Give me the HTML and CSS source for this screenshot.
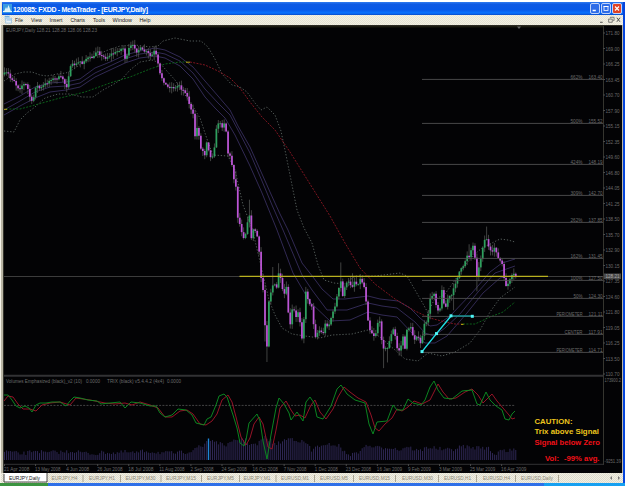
FILE: index.html
```
<!DOCTYPE html>
<html lang="en">
<head>
<meta charset="utf-8">
<title>120085: FXDD - MetaTrader - [EURJPY,Daily]</title>
<link rel="stylesheet" href="styles.css">
</head>
<body>
<div class="window">
  <header class="titlebar">
    <svg class="logo" viewBox="0 0 9 9"><rect width="9" height="9" fill="#3a9be0"/><path d="M1 7.5 L3 3 L4 5 L5.5 1 L8 7.5Z" fill="#d8f2fa"/><path d="M0 7.5H9" stroke="#e8f4fa"/></svg>
    <svg class="title" viewBox="0 0 140 12"><text x="0" y="8.8" textLength="135">120085: FXDD - MetaTrader - [EURJPY,Daily]</text></svg>
    <div class="buttons">
      <svg class="btn" viewBox="0 0 10 10"><path d="M2 7.5H6" stroke="#fff" stroke-width="1.6"/></svg>
      <svg class="btn" viewBox="0 0 10 10"><rect x="2.5" y="2.5" width="5" height="5" fill="none" stroke="#fff"/><path d="M2 2.5H8" stroke="#fff" stroke-width="1.5"/></svg>
      <svg class="btn close" viewBox="0 0 10 10"><path d="M2.5 2.5L7.5 7.5M7.5 2.5L2.5 7.5" stroke="#fff" stroke-width="1.4"/></svg>
    </div>
  </header>
  <nav class="menu">
    <svg class="menuicon" viewBox="0 0 9 9"><rect x=".5" y="0" width="6" height="5" fill="#b9dcf2"/><rect x="2" y="3" width="6.5" height="5.5" fill="#e8f3fa" stroke="#80b4dc" stroke-width=".7"/><path d="M1 1.2H6M3 5H8" stroke="#5c9cd0" stroke-width=".8"/></svg>
    <svg class="menutext" id="menu" viewBox="0 0 170 11"></svg>
    <svg class="mdi" viewBox="0 0 26 11"><path d="M2 8H5" stroke="#444"/><path d="M13.5 3.5V2.5H17.5V6H16.5M11.5 4.5H15.5V8H11.5Z" fill="none" stroke="#555" stroke-width=".8"/><path d="M20.5 3L24 7.5M24 3L20.5 7.5" stroke="#444"/></svg>
  </nav>
  <main class="chartframe"><svg id="chart" class="chart" viewBox="3 25 619 448"></svg></main>
  <footer class="tabs"><svg id="tabs" class="tabsvg" viewBox="0 473 622 10"></svg></footer>
</div>
<div class="taskbar"><span class="start"></span><span class="tray"></span></div>
<script src="chart.js"></script>
</body>
</html>
```
FILE: styles.css
```
* { box-sizing: border-box; }
body {
  margin: 0;
  width: 625px;
  height: 486px;
  overflow: hidden;
  background: #fff;
  padding-top: 2px;
  font-family: "Liberation Sans", Arial, sans-serif;
}
svg { display: block; flex: none; }
.window {
  height: 481px;
  display: flex;
  flex-direction: column;
  background: #ebe8d8;
  border-right: 2px solid #0645dc;
  border-left: 1px solid #f5f3e8;
}
.titlebar {
  height: 13px;
  display: flex;
  align-items: center;
  margin-left: 1px;
  padding-right: 1px;
  background: linear-gradient(#2f7bf0, #0d59e4 18%, #0658e8 60%, #0872ff 85%, #0648c8);
}
.logo { width: 9px; height: 9px; margin: 0 1px 0 1px; }
.title { width: 140px; height: 12px; font: bold 7px "Liberation Sans", sans-serif; fill: #fff; }
.buttons { display: flex; gap: 1px; margin-left: auto; }
.btn { width: 10px; height: 11px; border: 1px solid #bfd3fa; border-radius: 2px; background: #2d6ce8; }
.close { background: #df4326; }
.menu {
  height: 10px;
  display: flex;
  padding-left: 3px;
  background: repeating-conic-gradient(#f2f0e5 0 25%, #e7e4d3 0 50%) 0 0 / 2px 2px;
}
.menuicon { width: 8px; height: 9px; }
.menutext { width: 170px; height: 11px; font: 6.2px "Liberation Sans", sans-serif; fill: #222; }
.mdi { width: 26px; height: 10px; margin-left: auto; }
.chartframe { height: 448px; padding-left: 2px; background: #b9b5a4; display: flex; }
.chart { width: 619px; height: 448px; background: #030305; }
.chart text { font: 5.1px "Liberation Sans", sans-serif; fill: #6a6a6a; }
.chart .small { font-size: 4.6px; }
.chart .alert { font: bold 8px "Liberation Sans", sans-serif; }
.chart .gold { fill: #edc51d; }
.chart .red { fill: #f01018; }
.chart .tag { fill: #aaa; }
.tabs { height: 10px; background: repeating-conic-gradient(#f1efe5 0 25%, #dfdccb 0 50%) 0 0 / 2px 2px; }
.tabsvg { width: 622px; height: 10px; }
.tabsvg text { font: 5.3px "Liberation Sans", sans-serif; fill: #8d8878; }
.tabsvg .active { fill: #111; }
.taskbar { height: 3px; display: flex; background: #2f70e8; }
.start { width: 48px; background: #3b9440; }
.tray { width: 81px; margin-left: auto; background: #16a0f0; }
```
FILE: chart.js
```
const NS = 'http://www.w3.org/2000/svg';
const chart = document.getElementById('chart');

function add(parent, tag, attrs, text) {
  const el = document.createElementNS(NS, tag);
  for (const k in attrs) el.setAttribute(k, attrs[k]);
  if (text !== undefined) el.textContent = text;
  parent.appendChild(el);
  return el;
}
const parse = s => s.trim().split(/\s+/).map(p => p.split(',').map(Number));
const curve = (s, color, dash, w) => add(chart, 'polyline', {
  points: s, fill: 'none', stroke: color, 'stroke-width': w || 0.8,
  'stroke-dasharray': dash || 'none', 'stroke-linejoin': 'round'
});
const line = (x1, y1, x2, y2, color, w, dash) => add(chart, 'line', {
  x1, y1, x2, y2, stroke: color, 'stroke-width': w || 1, 'stroke-dasharray': dash || 'none'
});
const label = (x, y, w, text, cls, anchor) => add(chart, 'text', {
  x, y, textLength: w, lengthAdjust: 'spacingAndGlyphs', class: cls || '', 'text-anchor': anchor || 'start'
}, text);
function at(points, x) {
  for (let i = 1; i < points.length; i++) {
    if (x <= points[i][0]) {
      const [a, b] = [points[i - 1], points[i]];
      return a[1] + (b[1] - a[1]) * (x - a[0]) / (b[0] - a[0]);
    }
  }
  return points[points.length - 1][1];
}
let seed = 7;
const rnd = () => (seed = (seed * 16807) % 2147483647) / 2147483647;

// menu
const menu = document.getElementById('menu');
[['File', 3, 8], ['View', 19, 11], ['Insert', 37.5, 13], ['Charts', 58.5, 14.5], ['Tools', 81, 12], ['Window', 100.5, 19.5], ['Help', 127.5, 11]]
  .forEach(([t, x, w]) => add(menu, 'text', { x, y: 6.7, textLength: w, lengthAdjust: 'spacingAndGlyphs' }, t));

// frame and axes
line(3, 25.5, 622, 25.5, '#2c2b24');
line(4, 26.8, 603.5, 26.8, '#30301c', 0.8);
line(3.5, 25, 3.5, 473, '#34342c');
line(603.5, 26, 603.5, 465, '#35352f');
line(4, 375.8, 603, 375.8, '#323234', 2);
line(4, 464.3, 604, 464.3, '#323234');
line(4, 276.5, 604, 276.5, '#3c3c3c');
add(chart, 'path', { d: 'M517 26.5H521L519 29Z', fill: '#666' });

// price scale
['171.80', '169.00', '166.25', '163.45', '160.70', '157.90', '155.15', '152.35', '149.60', '146.80', '144.05', '141.25', '138.50', '135.70', '132.90', '130.15', '127.35', '124.60', '121.80', '119.05', '116.25', '113.50', '110.70']
  .forEach((t, i) => {
    const y = 33 + i * 15.5;
    line(603, y, 605, y, '#4a4a4a');
    label(605.5, y + 2, 14, t);
  });
label(604.5, 382.3, 16.5, '173900.2', 'small');
label(604.5, 463, 16.5, '-9251.39', 'small');

// bands and averages
const band = '#66706c';
curve('4,81 10,77 15,74 24,72 32,72 40,75 47,76 57,74 66,73 74,69 82,63 95,56 108,50 120,46 135,45 150,47 158,46 163,41 175,38 190,41 201,41 208,47 215,59 222,74 232,85 240,87 247,92 255,103 261,110 267,107 275,115 281,131 286,155 292,185 297,210 304,228 312,243 318,265 324,280 334,283 345,284 355,276 375,276 400,273 407,276 415,290 422,302 428,313 434,300 445,294 455,280 465,265 475,254 482,248 490,244 500,239 508,240 515,242', band, '1.3 1.8');
curve('4,131 14,132 20,120 27,113 35,107 45,98 58,94 70,94 82,97 93,97 103,90 114,84 122,79 130,70 140,62 152,60 160,63 166,70 175,80 183,92 190,102 200,118 208,142 213,155 228,156 235,170 243,205 252,228 262,270 269,300 275,315 282,328 292,334 305,336 320,338 332,335 352,334 368,330 380,337 395,350 405,359 418,361 428,353 442,356 455,352 470,343 480,330 490,312 500,298 515,287', band, '1.3 1.8');
const ma = '#372e5c';
curve('4,104 20,96 35,87 50,83 66,82 80,79 95,68 110,62 125,55 140,51 155,48 165,50 180,57 193,67 205,81 218,96 230,110 238,126 250,147 262,174 270,192 280,214 288,230 302,263 313,277 322,289 333,299 345,299 368,296 380,299 398,301 410,308 420,318 430,326 437,325 450,316 472,293 490,272 502,263 515,259', ma, '', 0.9);
curve('4,110 20,101 35,92 50,87 66,86 80,83 95,73 110,66 125,59 140,54 155,52 165,54 180,61 193,73 205,89 218,103 230,115 238,130 250,153 262,181 272,205 283,230 302,275 312,290 327,310 347,310 368,303 382,306 397,308 415,322 425,333 434,336 445,328 460,314 478,292 495,273 515,266', ma, '', 0.9);
curve('4,115 20,106 35,98 50,92 66,90 80,87 95,77 110,70 125,63 140,58 155,56 165,58 180,66 193,79 205,97 215,108 225,118 235,135 250,166 262,193 277,230 293,273 310,302 330,321 350,320 368,312 382,315 397,317 412,333 425,343 435,343 447,336 467,313 483,293 500,278 515,275', ma, '', 0.9);
curve('6,109 20,109 35,105 60,98 85,92 110,83 130,77 150,69 165,64 180,62 187,62', '#0c6a1c', '2 1.4', 0.9);
curve('190,62 205,65 218,71 230,78 240,88 250,102 262,117 275,130 290,152 310,184 330,216 345,243 360,268 375,284 395,299 415,311 430,318 445,322 455,324 461,324', '#8c1622', '2 1.3', 0.9);
curve('463,324 475,324 490,317 503,312 515,302', '#0c6a1c', '2 1.4', 0.9);
line(186, 62.2, 190, 62.2, '#b8a010');
line(461, 324.3, 463.5, 324.3, '#d8c010');
line(4, 109.3, 7, 109.3, '#b8a010');

// candles
const price = parse('3,76 5,73 8,73 10,78 14,80 17,87 20,88 23,84 27,85 29,95 31,99 32,103 34,96 35,87 38,86 40,89 44,85 48,82 51,79 55,79 60,77 63,79 66,87 68,85 69,70 72,65 77,64 80,61 82,64 85,59 89,58 94,57 97,49 101,56 106,58 111,54 115,53 119,50 123,48 126,63 128,50 131,46 134,46 137,52 140,48 143,51 147,52 151,57 155,50 158,64 160,74 163,80 167,87 171,87 176,88 179,84 182,90 185,91 188,99 191,110 194,117 195,136 198,124 200,148 203,151 205,155 207,139 210,158 213,155 215,143 217,124 219,122 222,127 224,122 226,130 228,153 231,158 234,179 237,192 238,224 240,224 243,237 245,237 248,218 250,216 251,239 253,230 256,231 258,240 260,262 262,291 264,289 265,325 267,346 269,298 272,288 274,281 276,293 279,270 282,288 284,297 286,283 288,310 291,330 293,297 295,321 299,309 301,334 303,341 305,290 309,302 312,308 315,337 319,330 323,334 326,321 328,328 331,318 334,310 338,292 341,281 342,300 345,285 349,282 352,287 355,280 357,286 360,279 363,283 365,290 367,310 369,328 372,333 375,337 379,316 381,335 383,347 387,350 390,338 394,328 397,348 400,351 403,336 405,350 407,328 411,328 414,340 417,335 421,345 424,325 427,323 430,300 434,292 437,310 440,308 442,290 445,310 448,298 452,295 456,281 460,270 463,268 467,255 470,257 472,244 474,248 477,276 480,263 483,245 486,236 489,249 492,254 495,246 498,258 502,263 505,286 508,284 510,280 513,274 516,276');
const spikes = { 197: -8, 235: -4, 249: -14, 265: 12, 267: 12, 272: -16, 278: -9, 341: -18, 353: -8, 383: 16, 387: 11, 453: 11, 469: -10, 477: 10, 486: -9 };
let prev = at(price, 4);
const pitch = 1.944;
for (let i = 0; i < 264; i++) {
  const x = 4.5 + i * pitch;
  const close = at(price, x) + (rnd() - 0.5) * 2.5;
  const top = Math.min(prev, close), bottom = Math.max(prev, close);
  let hi = top - 0.5 - rnd() * 5, lo = bottom + 0.5 + rnd() * 5;
  for (const k in spikes) if (Math.abs(k - x) < pitch / 2) spikes[k] < 0 ? hi += spikes[k] : lo += spikes[k];
  line(x, hi, x, lo, '#505350', 0.8);
  line(x, top, x, Math.max(bottom, top + 1), close < prev ? '#2ea05e' : '#bc54d6', 1.75);
  prev = close;
}

// projection levels
[['662%', '163.40', 79.4], ['500%', '155.52', 123.4], ['424%', '148.19', 164.4], ['309%', '142.70', 195.4], ['262%', '137.85', 222.4], ['162%', '131.45', 258.4], ['100%', '127.50', 280.4], ['50%', '124.30', 298.4], ['PERIOMETER', '121.11', 316.4], ['CENTER', '117.91', 334.4], ['PERIOMETER', '114.71', 352.4]]
  .forEach(([name, value, y]) => {
    line(422, y, 603, y, '#505050', 0.9);
    const w = { PERIOMETER: 26, CENTER: 18, '50%': 9 }[name] || 12;
    label(582.5, y - 0.8, w, name, name.length > 6 ? 'small' : '', 'end');
    label(602.5, y - 0.8, 14, value, '', 'end');
  });
line(239.5, 276.4, 548, 276.4, '#b8b020', 1.2);
add(chart, 'rect', { x: 604, y: 273.5, width: 17, height: 5.6, fill: '#4a4a4a' });
label(605.5, 278.3, 14, '128.21', 'tag');

// hand-drawn trend
curve('422,351.6 436.5,333.6 451,316', '#20dce4', '', 1.5);
curve('451,316 472.5,316', '#189a9e', '', 1.4);
[[422, 351.6], [436.5, 333.6], [451, 315.8], [472.3, 316.3]].forEach(([x, y]) =>
  add(chart, 'rect', { x: x - 1.5, y: y - 1.5, width: 3, height: 3, fill: '#4ff4f4' }));

// volumes
const volume = parse('4,451 12,452 20,454 27,453 35,450 45,453 55,452 65,452 74,451 85,453 95,454 105,452 115,453 125,452 135,453 145,451 155,452 165,453 175,453 187,452 192,450 196,447 203,447 206,441 213,440 222,445 230,444 236,440 243,438 250,444 257,445 264,437 270,440 276,445 282,441 291,438 300,441 308,444 312,452 317,445 324,447 331,444 340,446 346,454 350,456 354,450 358,457 361,447 370,446 380,448 390,447 400,450 407,446 413,449 420,451 427,447 436,448 445,450 455,449 463,446 472,448 482,447 490,449 494,456 500,449 508,451 516,450');
for (let i = 0; i < 264; i++) {
  const x = 4.5 + i * pitch;
  line(x, Math.min(455, at(volume, x)) + (rnd() - 0.5) * 4, x, 460, '#2e2754', 1);
}
line(208.5, 438.5, 208.5, 460, '#1e86d8', 1.4);

// oscillator
line(4, 405.4, 515, 405.4, '#4c4c4c', 0.9, '2 1.3');
curve('4,401 8,396 13,397 18,404 23,409 30,409 36,411 42,405 50,403 60,402 70,405 76,398 90,400 105,403 115,404 125,403 132,405 140,402 150,405 158,408 165,417 172,417 180,411 187,410 193,414 200,424 206,425 212,421 217,414 222,400 228,395 232,402 236,417 241,437 246,445 250,438 254,424 259,417 263,424 268,447 272,449 276,430 280,408 286,401 291,410 295,416 300,415 305,418 311,405 315,400 320,412 326,419 333,409 338,397 344,387 350,392 358,398 366,402 371,415 375,428 379,431 385,424 392,418 397,409 402,411 408,407 414,401 422,404 430,400 435,390 438,384 443,392 449,399 456,398 465,392 472,389 478,395 483,403 488,398 492,394 497,401 503,408 509,415 512,419 515,418', '#9c1428', '', 0.95);
curve('4,395 8,395 12,400 16,406 20,408 25,406 29,408 32,412 36,405 40,403 46,403 52,402 60,402 66,406 70,401 74,397 80,398 88,400 97,401 101,404 110,403 120,402 125,408 131,402 140,403 150,406 156,406 160,413 165,417 172,415 178,409 186,410 192,415 196,423 204,425 207,419 211,417 216,405 219,396 224,394 227,397 233,415 237,428 240,443 244,446 246,440 249,423 257,414 260,421 263,441 267,459 271,435 276,408 279,398 284,404 289,413 291,420 297,412 303,421 306,402 310,397 314,403 317,417 323,419 331,406 337,389 341,385 347,394 355,400 365,403 369,424 373,434 377,422 387,421 393,405 397,410 403,410 408,399 413,403 421,405 425,400 430,387 434,381 438,390 444,398 452,399 462,391 472,390 477,404 480,405 486,392 490,400 496,406 502,410 505,419 509,420 512,414 515,411', '#0c8a22', '', 0.95);

// captions
label(6, 32.2, 91, 'EURJPY,Daily  128.21 128.28 128.06 128.23');
label(6, 383, 76, 'Volumes Emphasized (black)_v2  (10)', 'small');
label(86, 383, 14, '0.0000');
label(107, 383, 57, 'TRIX (black) v5.4.4.2  (4x4)', 'small');
label(167, 383, 14, '0.0000');
label(534.5, 423.5, 38, 'CAUTION:', 'alert gold');
label(534.5, 434.2, 64.5, 'Trix above Signal', 'alert gold');
label(534.5, 445, 65.5, 'Signal below Zero', 'alert red');
label(545, 460.5, 14, 'Vol:', 'alert red');
label(564, 460.5, 35.5, '-99% avg.', 'alert red');

// dates
['21 Apr 2008', '13 May 2008', '4 Jun 2008', '26 Jun 2008', '18 Jul 2008', '11 Aug 2008', '2 Sep 2008', '24 Sep 2008', '16 Oct 2008', '7 Nov 2008', '1 Dec 2008', '23 Dec 2008', '16 Jan 2009', '9 Feb 2009', '3 Mar 2009', '25 Mar 2009', '16 Apr 2009']
  .forEach((t, i) => {
    const x = 4 + i * 31.07;
    line(x + 0.5, 464, x + 0.5, 466, '#4a4a4a');
    label(x, 471, t.length * 2.3, t);
  });

// chart tabs
const tabs = document.getElementById('tabs');
add(tabs, 'rect', { x: 3, y: 473, width: 43, height: 9, fill: '#fff' });
add(tabs, 'path', { d: 'M3 474V482H46V473', fill: 'none', stroke: '#222', 'stroke-width': 0.8 });
[['EURJPY,Daily', 8, 31], ['EURJPY,H4', 50.5, 26], ['EURJPY,H1', 88, 26], ['EURJPY,M30', 124.5, 30], ['EURJPY,M15', 165, 30], ['EURJPY,M5', 206, 27], ['EURJPY,M1', 242.5, 27], ['EURUSD,M1', 280, 28], ['EURUSD,M5', 319, 28], ['EURUSD,M15', 358, 31], ['EURUSD,M30', 401, 31], ['EURUSD,H1', 443, 27], ['EURUSD,H4', 482, 27], ['EURUSD,Daily', 520, 32]]
  .forEach(([t, x, w], i) => {
    add(tabs, 'text', { x, y: 480, textLength: w, lengthAdjust: 'spacingAndGlyphs', class: i ? '' : 'active' }, t);
    if (i) add(tabs, 'path', { d: `M${x + w + 5.5} 475V482`, stroke: '#aaa593', 'stroke-width': 1 });
  });
add(tabs, 'path', { d: 'M611 476L609 478L611 480ZM617 476L619 478L617 480Z', fill: '#777' });
```
